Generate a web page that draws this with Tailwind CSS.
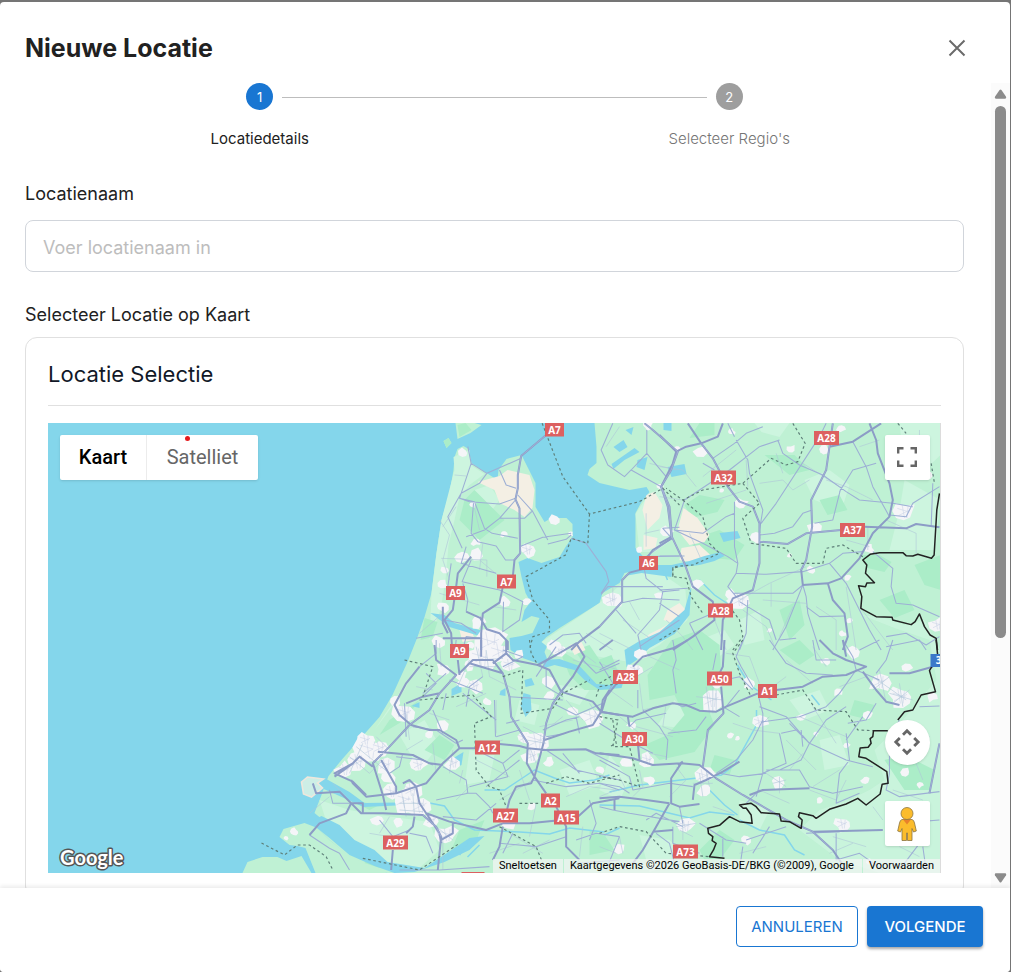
<!DOCTYPE html>
<html lang="nl">
<head>
    <meta charset="UTF-8">
    <meta name="viewport" content="width=device-width, initial-scale=1.0">
    <title>Nieuwe Locatie</title>

    <!-- Tailwind CSS -->
    <script src="https://cdn.jsdelivr.net/npm/@tailwindcss/browser@4"></script>
</head>

<body class="bg-[#757575] h-screen overflow-hidden pt-0.5 pr-px font-['Inter','Noto_Sans',sans-serif] text-[#212121]">

<div role="dialog" aria-labelledby="dialogTitle" class="flex flex-col h-full bg-white rounded overflow-hidden">

    <!-- Header -->
    <div class="flex items-center justify-between h-[81px] pt-2.5 pl-[25px] pr-[41px] shrink-0">
        <h1 id="dialogTitle" class="text-[25px] leading-8 font-bold">Nieuwe Locatie</h1>
        <button type="button" aria-label="Sluiten" class="text-[#6b6b6b]">
            <svg class="size-6" viewBox="0 0 24 24" fill="none" stroke="currentColor" stroke-width="2"><path d="M4.500 4.500 19.500 19.500M19.500 4.500 4.500 19.500"/></svg>
        </button>
    </div>

    <!-- Body -->
    <div class="flex flex-1 min-h-0">

        <div class="flex-1 min-w-0 overflow-hidden pl-[25px] pr-[27px]">

            <!-- Stepper -->
            <ol class="relative grid grid-cols-2 text-center text-[15px] leading-5">
                <li class="flex flex-col items-center">
                    <span class="size-[27px] rounded-full bg-[#1976d2] text-white text-[13px] leading-7">1</span>
                    <span class="mt-[19px]">Locatiedetails</span>
                </li>
                <li class="flex flex-col items-center text-[#757575] font-light">
                    <span class="size-[27px] rounded-full bg-[#9e9e9e] text-white text-[13px] leading-7 font-normal">2</span>
                    <span class="mt-[19px]">Selecteer Regio's</span>
                </li>
                <li aria-hidden="true" class="absolute top-3.5 left-1/4 right-1/4 mx-[22px] h-px bg-[#bdbdbd]"></li>
            </ol>

            <label for="locationName" class="block mt-[33px] text-lg leading-6">Locatienaam</label>
            <input
                id="locationName"
                type="text"
                placeholder="Voer locatienaam in"
                class="block w-full h-[52px] mt-3.5 px-[17px] pt-0.5 text-lg border border-[#d1d5db] rounded-lg placeholder:text-[#bdbdbd] focus:outline-none focus:border-[#1976d2]">

            <p class="mt-[31px] text-lg leading-6">Selecteer Locatie op Kaart</p>

            <section class="mt-2.5 px-[22px] pb-6 border border-[#e0e0e0] rounded-xl">
                <h2 class="h-[68px] pt-5 border-b border-[#e0e0e0] text-[22px] leading-8 text-[#111827]">Locatie Selectie</h2>

                <!-- Map -->
                <div class="relative h-[450px] mt-[17px] overflow-hidden bg-[#84d6eb] border-r border-[#dcdcdc] font-['Roboto',sans-serif]">
                    <svg class="block size-full" viewBox="48 423 893 450" preserveAspectRatio="xMidYMid slice" aria-hidden="true">
                        <!-- land -->
                        <g fill="#bff1d4">
                            <path d="M455 457 458 449 464 446 469 449 472 463 487 473 498 480 499 470 507 459 522 455 528 467 536 483 536 507 545 522 552 518 567 518 573 524 573 537 566 547 560 557 542 563 528 558 519 562 522 577 526 593 531 602 525 610 522 622 532 616 540 618 533 633 522 636 510 638 511 650 523 658 540 664 548 660 545 652 550 640 542 642 547 637 560 628 600 603 603 593 620 583 625 573 645 569 650 565 645 558 636 548 636 513 642 502 650 492 647 487 630 490 617 487 600 483 588 475 590 469 597 463 597 447 595 423 941 423 941 873 388 873 370 868 350 857 330 840 318 828 327 823 315 813 322 795 329 776 342 760 357 743 380 717 393 695 408 662 418 637 425 617 432 593 437 553 442 520 450 493 454 470Z"/>
                            <path d="M243 873 248 862 263 857 278 857 287 861 302 856 312 873Z"/>
                            <path d="M280 837 284 829 305 823 318 828 330 840 350 856 388 873 316 873 306 848 298 846 290 845Z"/>
                            <path d="M456 423 475 423 482 425 471 433 458 439ZM444 441 449 438 452 443 447 448Z"/>
                        </g>

                        <!-- light fields -->
                        <g fill="#cdf5df">
                            <path d="M455 470 454 457 470 450 471 465 485 474 470 485 460 497 455 520 449 545 446 580 441 610 430 640 415 670 395 700 375 730 405 690 425 650 430 640 432 593 437 553 442 520Z"/>
                            <path d="M542 642 600 603 622 584 630 573 660 572 686 590 688 620 660 645 630 662 590 655 552 650Z"/>
                            <path d="M636 514 650 493 665 488 672 540 655 552 640 552ZM475 490 490 485 500 500 485 520 470 515Z"/>
                            <path d="M320 800 350 810 380 815 430 822 440 850 420 868 395 870 365 850 330 838 318 825 327 822Z"/>
                            <path d="M862 615 885 618 905 625 925 620 941 650 941 873 880 873 840 860 800 830 820 810 850 800 870 790 885 780 875 750 895 730 920 700 937 680 930 640 895 628Z" opacity=".7"/>
                            <path d="M755 423 790 423 780 437 762 432ZM805 480 830 470 850 485 842 510 815 500ZM900 423 941 423 941 455 920 475 905 470ZM905 480 941 500 936 550 890 550 900 510ZM470 750 495 755 490 780 465 785ZM640 835 670 840 690 860 650 872Z"/>
                            <path d="M658 725 675 700 690 715 680 728ZM560 685 590 690 580 705 565 700ZM700 640 725 630 735 645 715 660Z"/>
                            <path d="M400 735 425 720 440 745 420 770ZM520 700 540 705 535 725 515 720ZM560 770 590 760 600 785 570 795ZM610 755 630 780 620 800 600 790ZM740 620 760 610 765 640 745 645ZM790 700 820 690 830 710 805 720ZM740 800 770 810 760 830 740 820ZM820 740 840 735 850 765 825 770Z"/>
                        </g>

                        <!-- woods -->
                        <g fill="#abedc8">
                            <path d="M425 618 438 622 433 637 421 640ZM458 425 466 423 472 430 460 437ZM444 441 449 438 452 443 447 448Z"/>
                            <path d="M465 500 475 490 485 500 505 520 480 540 460 520ZM420 700 405 720 380 735 390 720ZM425 750 440 735 455 745 445 760Z"/>
                            <path d="M672 640 700 630 720 645 722 680 705 700 715 725 695 752 660 760 645 745 668 735 685 715 675 695 650 700 648 675Z"/>
                            <path d="M560 650 585 665 612 655 620 675 612 690 585 690 570 675ZM575 650 590 645 600 660 585 665Z"/>
                            <path d="M685 505 700 495 725 500 718 512 692 518ZM690 540 720 530 745 545 735 560 700 557ZM765 455 795 455 810 470 790 475ZM700 423 715 423 715 435 690 438ZM820 500 840 495 848 510 828 515ZM780 610 800 600 805 625 790 640ZM862 555 880 555 892 562 885 572 868 568ZM915 565 941 555 941 590 925 585ZM880 600 905 590 915 610 895 618Z"/>
                            <path d="M715 755 735 760 730 775 710 770ZM780 650 800 640 815 655 800 665ZM855 700 875 705 870 720 850 715ZM885 760 905 755 935 770 930 790 905 790ZM700 850 720 830 735 840 720 860 710 870ZM590 830 605 835 615 850 590 855ZM450 855 475 845 485 820 460 830ZM350 800 380 805 370 810ZM372 855 385 860 380 868 365 863Z"/>
                        </g>

                        <!-- bulb and polder fields -->
                        <g fill="#f4efe4">
                            <path d="M478 482 500 476 508 470 530 475 535 490 533 508 525 517 515 510 500 503 495 490ZM643 510 647 495 655 492 663 505 660 518 648 530ZM644 535 658 538 656 548 644 550ZM684 508 698 518 710 535 705 542 690 545 678 530ZM682 548 700 545 712 556 695 563 680 560ZM664 620 668 610 680 603 688 612 676 624Z"/>
                            <path d="M638 645 650 634 662 628 672 622 668 632 655 640 645 650Z"/>
                            <path d="M570 645 582 642 586 650 575 655ZM460 630 472 628 475 640 463 642Z"/>
                        </g>

                        <!-- lakes, rivers and estuaries -->
                        <g fill="#84d6eb">
                            <path d="M641 565 672 565 690 561 705 556 721 552 725 556 715 561 700 565 673 568 672 577 642 573 625 576Z"/>
                            <path d="M668 467 685 464 687 474 672 477ZM720 533 738 531 741 538 724 542ZM664 423 672 423 672 431 664 430ZM614 447 624 440 628 447 620 452ZM612 464 635 448 640 452 625 460 614 469ZM638 460 648 457 645 470 637 467ZM626 430 634 427 632 435Z"/>
                            <path d="M524 693 531 695 532 710 526 717 521 705ZM452 689 462 683 462 692 452 696ZM412 706 420 702 420 708ZM501 691 506 688 506 696 500 695ZM525 680 532 678 535 685 526 687ZM454 758 464 752 462 765 455 768Z"/>
                            <path d="M310 822 322 816 340 825 355 840 375 850 388 862 425 868 452 850 470 838 485 836 470 850 445 862 415 872 395 873 375 866 350 855 330 838Z"/>
                            <path d="M325 778 350 792 365 803 430 802 430 804 364 807 340 796 322 788Z"/>
                            <path d="M543 660 560 659 580 666 597 684 610 685 625 678 622 688 600 690 585 680 575 670 555 665 545 668Z"/>
                            <path d="M625 650 640 641 660 632 685 610 692 585 690 615 675 634 650 648 637 660 627 667Z"/>
                            <path d="M431 613 445 615 455 623 480 630 500 640 500 642 470 633 450 627Z"/>
                        </g>
                        <path fill="none" stroke="#84d6eb" stroke-width="1.5" d="M430 803 445 806 455 820 475 830 520 832 550 834 570 828 605 832M600 805 640 806 690 818 710 812 735 815M710 790 725 805 738 815M740 820 760 830 785 835 795 850 805 855M485 790 505 790 520 780 535 770 555 778 570 783 595 780 610 775M605 835 620 828M738 665 750 685 772 700M700 580 715 595 730 605M664 570 668 580M757 710 757 725 735 765 722 775 640 785 610 792M812 695 820 705M460 855 470 840M468 857 480 845"/>

                        <!-- towns, filled by drawTowns() -->
                        <g id="towns" fill="#f5f5f8" stroke="#cdd5e8" stroke-width=".6"></g>

                        <!-- port of Rotterdam -->
                        <path fill="#cdeee6" stroke="#efe7dc" stroke-width="1.600" d="M302 782 308 777 324 779 318 783 323 788 312 797 304 794Z"/>

                        <!-- small roads -->
                        <g fill="none" stroke="#aec6d8" stroke-width="1.800" stroke-linejoin="round">
                            <path transform="translate(400 420) scale(.3333)" d="M165 165 200 168M120 300 150 345 130 420 150 480M60 640 130 580M125 415 262 420 262 470M222 250 240 330M735 340 780 330M740 280V380M670 600 760 660M600 640 700 690M690 545 720 600M640 500 640 545M560 640 640 690M750 130 830 150M620 80 660 20M170 260 130 320M240 420 300 470M120 520 240 555M250 370 240 450M280 560 350 570"/>
                            <path transform="translate(660 420) scale(.3333)" d="M0 140 70 150 110 200M130 170 230 90M260 120 265 200M300 190 370 180 400 210 450 180M500 180 560 200 640 240M560 360 630 380M625 320V390M240 540 330 490 440 440M310 540 440 550M335 490V560M560 500 590 690M600 80 660 60M780 30V180M0 230 70 240M140 250 260 210M90 340 130 430M150 560 200 690M250 570 320 620 350 690M680 300 770 340 770 400M430 130 540 200M350 100 370 160M470 560 530 600 530 690M20 600 70 650 100 690M600 560 700 690M400 560 360 650"/>
                            <path transform="translate(290 640) scale(.3333)" d="M200 320 300 400M180 350 240 400M220 310 180 400M260 290 300 330M340 470 350 530M370 460 375 530M330 490 400 490M330 510 400 515M560 20 580 110M590 30 600 110M540 80 620 80M570 60 640 55M450 10 455 80M380 140 430 150M420 220 480 240M500 200 590 160M540 60 500 150M620 180V280M580 320 640 300M560 360 660 410M630 480 730 420M700 260 760 290M710 300 770 310M720 320 740 370M830 180 880 240M900 190 940 250M830 470 900 440 980 450M820 230 770 270M490 330 480 400M430 310 440 400M350 220 360 300M400 300 350 330M240 580 300 590M120 470 60 520M600 640 690 610M740 490 720 590M660 580 760 640M880 560 870 650M510 430 520 390M540 440 500 480M850 60 960 90M880 40 920 70M700 640 780 600M170 470 130 430M420 530 460 610M440 560 490 600M460 590 460 690M750 260 850 240M600 110 680 150M690 390 720 480M240 400 280 360M300 530 270 580"/>
                            <path transform="translate(600 640) scale(.3333)" d="M0 70 110 110 160 80M120 130 130 210 220 190M30 150 100 200M150 50 240 90M110 260 220 290M200 190 190 260 240 280M290 170 370 180M320 140 330 220M340 140 340 220M350 150 350 210M380 40 450 50 480 130M400 250 460 270 540 280M480 170 560 110M490 250 510 230M560 60 640 130M600 230 740 290M640 200 710 310M640 20 680 80M720 140 800 110M840 90 860 190M820 110 920 180M870 160 940 180M880 190 930 150M900 130 910 200M820 150 870 110M500 400 560 440M540 410 540 460M520 430 560 420M480 450 570 490M630 450 710 480 740 420M640 440 720 390M700 590 800 620M820 500 850 540M900 620 960 650M250 540 250 600M230 560 290 550M240 570 280 590M60 590 70 640M0 620 50 640M120 390 130 440 100 470M280 430 340 430M300 400 310 470M320 390 330 440M230 380 260 420 210 470M340 500 400 520M420 640 500 620M900 290 990 290M880 450 970 480M950 370 970 420M690 640 760 610M560 300 650 390M610 340 570 390M150 340 200 350M60 230 120 280M0 470 50 450M60 410 80 450"/>
                        </g>

                        <!-- regional roads -->
                        <g fill="none" stroke="#9dafd5" stroke-width="3.2" stroke-linejoin="round">
                            <path transform="translate(400 420) scale(.3333)" d="M205 80 215 130 262 160 365 115M262 160 240 190 185 220 145 290 188 385M215 130 180 235 210 245 300 252 348 235M180 235 225 245 255 325 278 340 355 355M300 150 320 195 350 205M355 225 400 275 445 360M400 272 375 295 300 295 255 330 200 350M348 240 300 295M360 380 430 352 515 340M445 372 500 358 515 345M515 355 560 370 620 455 628 485 605 520M222 250 215 340 235 365M200 380 185 430 290 460 M235 365 290 378 318 420 345 420M215 420 188 485 300 510 370 545 360 600 310 635 312 545M205 540 190 490M200 575 205 540M155 430 145 500 165 530M135 600 185 610 230 640M50 655 130 640M640 10 605 90 625 135 675 170 695 150 785 200M742 30 742 100 800 170M695 150 742 100M605 523 625 500 790 500M668 548 730 535 840 540M735 450 740 475 790 515 780 570 715 645 725 690M650 570 710 640M790 515 840 510M780 550 840 590M817 355 740 410 840 408M817 355 790 325 840 322M450 675 490 645 540 640 560 670M720 680 840 600M190 690 200 650 240 655"/>
                            <path transform="translate(660 420) scale(.3333)" d="M75 240 210 150 300 80 360 60M160 115 225 70 260 40 310 20M130 130 165 150M230 60 265 120 270 160 310 270 300 330M300 345 345 340 400 320 430 280 458 270M305 310 350 250 480 50 500 10M355 60 370 100 420 135 490 165M490 165 560 215 600 240 700 250M580 65 620 140 640 200 690 290M540 215 580 150 650 130M465 310 520 300 545 200M205 10 225 50M45 330 130 340 200 290 225 280M75 240 45 330 130 370 205 410 235 430 230 460 320 463 430 455 510 430 550 400 610 395M225 245 225 380 235 430M230 460 205 500 230 530M220 520 400 520 430 495 440 530 445 580 480 690M440 560 480 590 555 588M240 545 330 600 350 660M430 495 380 620 340 690M265 540 260 640 240 690M0 408 75 408M0 510 85 505M90 610 160 580M90 610 130 690M510 430 560 490 590 550 630 630 665 690M640 395 700 445 695 500 710 550 760 555 840 590M690 285 740 290 760 250 840 200M700 250 760 260M820 190 815 320M680 650 740 640 800 675 840 650M660 660 600 690M360 660 410 655"/>
                            <path transform="translate(290 640) scale(.3333)" d="M440 0 440 40 390 80M500 0 495 50M410 100 440 130 400 170M345 190 350 290M370 260 440 270 500 310 520 300M430 210 460 280M300 400 330 380 340 340M320 350 400 360 430 375M460 210 470 160M530 200 540 140 580 110M520 160 620 240M615 180 618 290M660 170 820 180M620 290 690 270M560 330 640 370 690 330M640 370 655 410 540 440M460 380 530 420 535 460 440 480M530 460 560 460 600 500M460 530 560 540 620 490M120 450 130 490 180 490M60 585 120 625 150 640 180 690M270 540 310 590 360 570M360 580 410 590 430 640M330 690 450 690 600 680M630 610 740 620 830 590M730 420 830 440 930 430 990 450M760 270 830 240 870 230M790 190 860 225 940 190M860 230 870 280M880 60 920 100 990 70M770 330 860 390 990 420M820 340 870 400M890 330 990 380M860 600 920 580 990 590M900 480 920 550 900 600M690 360 590 440M470 100 400 160M770 290 830 280M640 80 700 50 640 30M820 170 770 140 770 90M580 160 480 120M740 110 800 20M650 250 690 240M860 670 990 660M670 580 640 640M600 500 610 520M880 0 860 10"/>
                            <path transform="translate(600 640) scale(.3333)" d="M0 65 40 130 20 170M115 150 115 205M220 0 230 60 220 90 230 160M225 190 250 200 290 190M430 0 410 50 425 80 460 140M510 0 560 70 620 100 700 105M640 0 650 60 710 60M730 0 760 50 770 90M880 0 860 60 830 100M860 20 960 0 980 30M770 90 840 120M475 160 490 220 490 400M490 240 460 300 410 360 350 400M540 280 560 370 490 400 470 470M490 245 600 230 680 200 720 160 770 90M480 200 560 230 630 310 740 360 820 380M630 310 570 250M545 280 590 270 630 310 605 360 540 390M630 310 680 240 740 200M740 280 750 360 720 400 710 490 780 460M500 390 600 390 630 440 700 460 790 440M500 400 420 410 360 400M790 230 740 300M830 190 800 240 745 250M900 240 870 300 870 400 860 450 900 470 1020 455M960 200 1020 198M0 250 80 300 160 340M90 260 110 240 200 220M130 210 180 260 205 300 200 360M205 280 290 270 320 230M0 360 90 410 100 450 210 430M0 430 60 440 90 460M210 430 280 440M0 500 40 510 90 520 240 545M140 540 170 520 250 560M220 560 220 610 300 640M170 580 210 610 230 690M60 590 20 690M370 590 370 650M300 550 380 600 440 610M440 600 560 560M430 620 420 690M620 580 720 575M710 580 710 660 780 640 850 690M510 560 460 640M480 450 440 490M1020 540 960 545M960 610 930 650 900 690M970 620 980 690M240 500 250 550M0 90 60 60M350 40 340 90M375 120 420 110 460 150M380 200 420 150M420 230 370 200M610 320 605 270"/>
                        </g>

                        <!-- motorways -->
                        <g fill="none" stroke="#8c9cc6" stroke-width="6" stroke-linejoin="round">
                            <path transform="translate(400 420) scale(.3333)" d="M440 45 365 108 355 165 355 205 348 238 360 265 362 400 345 420 340 470 310 500 300 548 250 580 245 640 245 690M215 410 175 460 170 500 160 570 135 600 155 640 158 690M130 560 130 610 145 640M240 590 262 628 300 640 325 665 325 690M200 575 245 595M735 10 760 30 835 95 815 150 785 200 805 260 817 355 760 390 745 410M740 445 690 458 668 480 668 545 600 620 540 665 515 690M130 655 245 655"/>
                            <path transform="translate(660 420) scale(.3333)" d="M0 45 50 95 40 130 5 200 30 260 37 350 75 430 100 500 160 545 165 600 100 650 40 690M50 95 80 80 125 70 175 50 190 10M85 10 125 70 160 115 205 200 240 245 280 260 300 310 300 430 280 510 220 535 190 600 185 690M520 10 500 150 455 240 458 320 440 420 425 450 430 495 505 490 545 475 600 415 640 340 690 290 700 240 690 190 655 100 650 60 630 10M300 365 385 372 440 340 545 330M615 320 740 325 770 312 840 322M510 80 580 65 665 10M505 490 520 540 555 580 565 650 550 690M0 370 37 350"/>
                            <path transform="translate(290 640) scale(.3333)" d="M575 0 575 50M435 15 440 60 500 105 450 160 420 210 360 255 300 320 250 370 280 465 290 510M505 60 510 105M510 100 550 60 610 60 640 100 660 170 665 230 690 270 715 310 712 370 735 410 770 460M650 0 650 40 610 70M650 40 670 60 745 75 780 90 815 155 790 190 770 250 762 310 735 410 725 430 680 440 660 480 650 520M745 75 800 45 860 10 885 50 850 110 815 155 910 185 935 215 910 255 840 275 765 300M935 215 990 225M935 215 940 180 960 150M390 80 350 130 315 195 330 225 365 255 420 270 450 270 500 300 510 325 460 370 410 430 380 440 320 460 230 470 190 430 185 420M540 70 640 100M510 325 565 325M630 312 690 318 715 325 770 330 890 328 920 340 990 345M265 335 370 345 420 370 460 375M135 410 190 370 210 350 250 380M275 360 320 440 320 460M190 370 135 400 190 425 230 465M70 430 80 460 150 455 215 520 280 520 400 525 440 560 455 590 445 690M180 490 220 490 220 520M375 530 370 560 350 580M310 630 305 690M60 585 90 550 170 520 185 490M340 430 360 420 380 440 390 490 410 520 480 545 590 570 640 550 720 550 795 542M410 520 450 580 455 610M640 560 630 620 610 660M800 500 830 560 830 620 870 660M865 530 910 490 990 475M350 190 400 170 450 160M490 545 490 580 455 600"/>
                            <path transform="translate(600 640) scale(.3333)" d="M40 0 0 30M0 215 100 230 160 205 220 190 260 195 300 212 350 215 380 200 475 160M60 120 20 170 5 220M85 230 90 260M265 0 220 25 130 50 100 80M375 0 370 80 360 100M365 140 372 220 325 270 310 380M530 150 610 140 670 110 740 105 800 80 770 70 740 60 700 40 660 0M790 95 830 150 860 185 900 195M870 100 930 100 1000 80M115 310 120 360M0 340 100 355 160 375 245 370 300 375 350 415 430 465 560 540 640 575 700 630 740 690M245 370 215 415 215 490 240 500 300 492M210 490 170 560 130 630 100 670M0 475 60 470 140 480 210 490M45 480 45 510M280 480 285 435 320 420 370 395 420 365M250 365 235 375M450 465 490 450 630 445M1020 310 990 460M640 575 850 570M160 575 220 570M730 0 740 50"/>
                        </g>
                        <g fill="none" stroke="#aab9dc" stroke-width="2">
                            <path transform="translate(400 420) scale(.3333)" d="M440 45 365 108 355 165 355 205 348 238 360 265 362 400 345 420M735 10 760 30 835 95 815 150 785 200 805 260 817 355M690 458 668 480 668 545 600 620"/>
                            <path transform="translate(660 420) scale(.3333)" d="M125 70 160 115 205 200 240 245 280 260 300 310 300 430 280 510M520 10 500 150 455 240 458 320 440 420 425 450M5 200 30 260 37 350 75 430 100 500M300 365 385 372 440 340 545 330"/>
                            <path transform="translate(290 640) scale(.3333)" d="M500 105 450 160 420 210 360 255 300 320 250 370M640 100 660 170 665 230 690 270 715 310M815 155 790 190 770 250 762 310M400 525 440 560 455 590"/>
                            <path transform="translate(600 640) scale(.3333)" d="M350 415 430 465 560 540 640 575 700 630M372 220 325 270 310 380M1020 310 990 460"/>
                        </g>

                        <!-- province borders -->
                        <g fill="none" stroke="#5e7f79" stroke-width="3.5" stroke-dasharray="8 8">
                            <path transform="translate(400 420) scale(.3333)" d="M428 10 490 170 570 282 720 245 790 205 840 255M570 282 565 370 515 355 498 405 380 470 400 540 450 600 450 635 400 650 390 690M820 470 820 445 840 440M780 660 840 625"/>
                            <path transform="translate(660 420) scale(.3333)" d="M400 10 437 70 415 125 380 135 335 115 250 190 130 210 70 240 20 205M70 240 130 290 150 370 180 400 100 435 40 440 40 470 80 475 95 530 130 580M250 190 300 250 250 295 275 370 380 385 410 430 490 430 500 385 550 375 610 410M210 560 240 600 250 650 220 690M715 10 740 40M815 130 825 190"/>
                            <path transform="translate(290 640) scale(.3333)" d="M345 60 430 80 400 170M390 180 550 165 605 230 555 250 560 390 600 440 630 450 650 500M720 0 725 40 745 75M640 110 700 90 695 220 790 205 820 160 900 120M770 430 830 410 900 430 990 405M690 490 750 490M630 560 740 620 760 670M970 240 980 310 960 320M-84 609 -15 645 24 615 60 615 110 650 130 690M220 655 390 690 510 610M920 170 930 140 990 130"/>
                            <path transform="translate(600 640) scale(.3333)" d="M430 0 400 40 420 100 455 170M530 165 610 150 650 210 740 215 775 270 820 272M0 230 55 240 40 320 90 320 120 440 60 420 0 410M0 580 60 560 140 575 200 640 330 650M0 130 50 100"/>
                        </g>

                        <!-- national border -->
                        <g fill="none" stroke="#222" stroke-width="4.5" stroke-linejoin="round">
                            <path transform="translate(660 420) scale(.3333)" d="M840 220 832 270 824 405 816 415 775 403 760 408 740 407 730 398 660 398 632 403 610 420 622 435 618 460 645 488 622 489 618 500 597 497 607 530 604 565 650 590 698 592 700 600 755 614 767 605 780 582 795 620 812 645 830 655 834 690"/>
                            <path transform="translate(600 640) scale(.3333)" d="M1010 0 1015 50 990 92 1008 155 965 165 940 210 915 215 895 240M865 272 822 272 820 290 812 296 815 310 806 322 782 324 778 350 800 355 862 395 866 430 848 433 842 462 800 495 775 475 740 492 690 508 650 535 640 527 600 518 597 530 608 540 605 565 570 545 545 543 540 522 485 518 470 500 455 490 420 495 432 505 440 504 455 525 458 550 420 545 390 530 360 556 325 565 327 580 340 590 338 602 350 610 342 630 330 650 375 655"/>
                        </g>

                        <!-- road numbers, filled by drawShields() -->
                        <g id="shields" fill="#fff" font-family="Open Sans, sans-serif" font-size="10" font-weight="700" text-anchor="middle"></g>
                    </svg>

                    <!-- Map type -->
                    <div class="absolute left-3 top-3 flex h-[45px] bg-white rounded-xs shadow text-xl">
                        <button type="button" class="w-[87px] pb-0.5 font-medium text-black border-r border-[#ececec]">Kaart</button>
                        <button type="button" class="w-[111px] pb-0.5 text-[#666]">Satelliet</button>
                        <span class="absolute left-[125px] top-px size-[5px] rounded-full bg-[#e5191c]"></span>
                    </div>

                    <button type="button" aria-label="Volledig scherm" class="absolute right-2.5 top-3 size-[45px] grid place-items-center pr-px pb-px bg-white rounded-xs shadow">
                        <svg class="size-5" viewBox="0 0 20 20" fill="none" stroke="#666" stroke-width="2.4"><path d="M1.2 6.500V1.2H6.500M13.500 1.2H18.800V6.500M18.800 13.500V18.800H13.500M6.500 18.800H1.2V13.500"/></svg>
                    </button>

                    <div class="absolute right-2.5 bottom-[27px] flex flex-col gap-9">
                        <button type="button" aria-label="Camerabediening" class="size-[45px] grid place-items-center pr-px pb-px bg-white rounded-full shadow">
                            <svg class="size-7" viewBox="0 0 28 28" fill="none" stroke="#666" stroke-width="2.8"><path d="M10 6.800 14 2.800 18 6.800M10 21.200 14 25.200 18 21.200M6.800 10 2.800 14 6.800 18M21.200 10 25.200 14 21.200 18"/></svg>
                        </button>
                        <button type="button" aria-label="Street View" class="size-[45px] grid place-items-center pr-px bg-white rounded-xs shadow">
                            <svg class="w-5 h-9" viewBox="0 0 20 36" fill="#fbbc2c" stroke="#8a7440" stroke-width=".8">
                                <path d="M5 13.500H15Q17 14 17.500 17L19.300 25 16.500 26 15 22.500V34.500H10.500V27H9.500V34.500H5V22.500L3.500 26 .7 25 2.500 17Q3 14 5 13.500Z"/>
                                <path fill="#e8812b" stroke="none" d="M6 13.500H14L10 18.500Z"/>
                                <circle cx="10" cy="7.500" r="6"/>
                            </svg>
                        </button>
                    </div>

                    <!-- Logo -->
                    <svg class="absolute left-2 bottom-0 w-[72px] h-[30px]" viewBox="0 0 72 30" role="img" aria-label="Google">
                        <text x="4" y="22" fill="#fff" stroke="#555" stroke-width="3" stroke-linejoin="round" paint-order="stroke" font-family="Lato, sans-serif" font-size="20" font-weight="700">Google</text>
                    </svg>

                    <!-- Attribution -->
                    <div class="absolute right-0 bottom-0 flex h-3.5 text-[11px] leading-[14px] text-black">
                        <button type="button" class="px-1.5 bg-[#f5f5f5]/70">Sneltoetsen</button>
                        <span class="ml-px pl-1.5 pr-2 bg-[#f5f5f5]/70 whitespace-nowrap">Kaartgegevens ©2026 GeoBasis-DE/BKG (©2009), Google</span>
                        <a href="#" class="ml-px px-1.5 bg-[#f5f5f5]/70">Voorwaarden</a>
                    </div>
                </div>
            </section>
        </div>

        <!-- Scrollbar -->
        <div aria-hidden="true" class="flex flex-col items-center w-[19px] shrink-0 bg-[#fbfbfb] pt-1.5 pb-[5px]">
            <svg class="w-[13px] h-2.5 shrink-0" viewBox="0 0 14 10" fill="#8b8b8b"><path d="M6 .8Q7-.4 8 .8L13 8Q13.500 10 12 10H2Q.5 10 1 8Z"/></svg>
            <div class="flex-1 w-[11px] my-[7px]">
                <div class="h-[70%] rounded-full bg-[#8b8b8b]"></div>
            </div>
            <svg class="w-[13px] h-2.5 shrink-0" viewBox="0 0 14 10" fill="#8b8b8b"><path d="M6 9.200Q7 10.400 8 9.200L13 2Q13.500 0 12 0H2Q.5 0 1 2Z"/></svg>
        </div>
    </div>

    <!-- Footer -->
    <div class="relative flex justify-end gap-[9px] shrink-0 h-[84px] pt-[18px] pr-[27px] bg-white shadow-[0_-2px_4px_rgba(0,0,0,0.08)] text-[15px]">
        <button type="button" class="h-[41px] w-[122px] pt-px border border-[#1976d2] rounded text-[#1976d2] hover:bg-[#1976d2]/5">ANNULEREN</button>
        <button type="button" class="h-[41px] w-[116px] pt-px rounded bg-[#1976d2] hover:bg-[#1565c0] text-white font-medium shadow-[0_2px_3px_rgba(0,0,0,0.35)]">VOLGENDE</button>
    </div>

</div>

<script>

// x, y, size
const towns = [
    [464,453,6],[473,505,4],[476,542,5],[478,555,8],[462,558,8],[528,550,9],[556,520,7],[571,534,3],[504,534,4],[506,602,7],[527,602,5],
    [443,607,7],[446,570,5],[443,585,6],[478,622,8],[440,642,8],[490,643,19],[482,658,16],[500,652,14],[510,665,10],[470,665,7],[560,650,9],[552,646,6],
    [612,600,11],[660,595,5],[667,532,7],[648,425,6],[661,486,4],[640,550,4],[677,449,4],[702,451,8],[742,504,7],[756,538,7],[816,527,8],
    [825,450,6],[841,429,5],[850,620,4],[905,512,12],[869,549,6],[740,600,12],[732,595,7],[697,585,7],[790,555,3],[792,449,5],[732,432,4],[928,475,6],
    [812,570,5],[848,578,4],[722,490,3],[938,625,9],[843,634,4],[770,630,3],
    [370,750,17],[358,762,13],[380,748,11],[345,770,10],[366,740,9],[386,765,11],[405,713,13],[396,702,7],[442,725,8],[454,763,9],[419,765,9],
    [405,800,16],[420,806,14],[392,792,10],[412,790,12],[432,820,9],[447,835,12],[398,822,6],[378,820,7],[295,832,5],[286,838,3],[444,669,8],[462,676,6],
    [475,686,9],[464,682,7],[488,702,5],[524,738,9],[537,741,15],[532,756,10],[548,682,8],[550,695,6],[556,645,7],[572,712,7],[592,717,13],
    [550,762,6],[508,824,8],[532,806,5],[636,670,9],[640,655,8],[632,725,5],[648,760,9],[626,763,7],[712,700,14],[718,685,5],[704,776,12],
    [715,682,4],[750,683,7],[760,722,9],[778,782,8],[802,717,5],[847,746,4],[880,682,12],[901,697,13],[907,668,6],[853,652,8],[866,780,5],
    [868,716,6],[838,692,5],[843,824,9],[686,826,10],[746,840,6],[705,790,8],[620,850,7],[932,697,6],[650,780,6],[731,736,4],[600,770,5],
    [738,738,3],[906,773,6],[920,785,4],[826,661,5],[430,735,5],[388,778,8],[820,800,4],[870,862,4],[816,734,3],[470,645,5],[520,655,6]
];

const shields = [
    ["A7",555,429.5],["A32",724,477.5],["A28",827,438],["A37",853,530],["A6",649,563],["A7",507,581.5],["A9",456,593],["A28",721,610.5],
    ["A9",460,651],["A28",626,677],["A50",720,678.5],["A1",768,691],["A12",488,747.5],["A30",635,739],["A2",551,800.5],["A27",506,815.5],
    ["A15",567,817.5],["A29",396,842.5],["A73",686,851.5]
];

//----------------------------

function drawTowns(){

    let html = "";

    towns.forEach(([x, y, r], n) => {

        let points = [];

        // uneven outline, seven to nine corners
        let corners = 7 + n % 3;

        for(let i=0;i<corners;i++){

            let angle = i / corners * Math.PI * 2 + n;
            let reach = r * (0.62 + ((i * 7 + n * 5) % 6) / 10);

            points.push(`${(x + Math.cos(angle) * reach).toFixed(1)},${(y + Math.sin(angle) * reach * 0.85).toFixed(1)}`);

        }

        html += `<polygon stroke="none" points="${points.join(" ")}"/>`;

        if(r > 8){

            html += `<path fill="none" d="M${x - r * 0.6} ${y - r * 0.3}l${r} ${r * 0.3}M${x - r * 0.5} ${y + r * 0.3}l${r} ${-r * 0.5}M${x - r * 0.2} ${y - r * 0.6}l${r * 0.2} ${r * 1.1}M${x + r * 0.3} ${y - r * 0.5}l${-r * 0.1} ${r}"/>`;

        }

    });

    document.getElementById("towns").innerHTML = html;

}

//----------------------------

function drawShields(){

    let html = "";

    shields.forEach(([name, x, y]) => {

        let w = name.length > 2 ? 25 : 19;

        html += `<rect x="${x - w / 2}" y="${y - 7}" width="${w}" height="14" fill="#dc6060"/><text x="${x}" y="${y + 4}">${name}</text>`;

    });

    html += `<rect x="931" y="654" width="12" height="13" fill="#3b78c9"/><text x="939" y="664">3</text>`;
    html += `<rect x="462" y="872" width="23" height="14" fill="#dc6060"/>`;

    document.getElementById("shields").innerHTML = html;

}

drawTowns();
drawShields();

</script>

</body>
</html>
